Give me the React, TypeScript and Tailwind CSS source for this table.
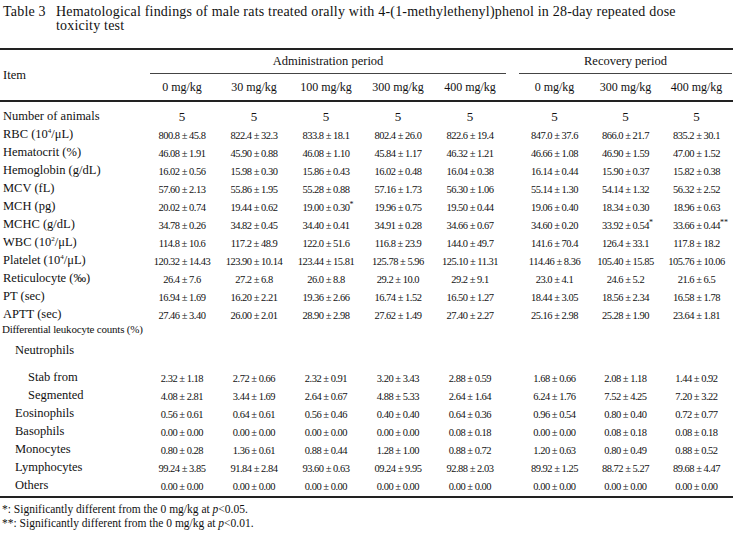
import React from 'react';

type Row = {
  label: React.ReactNode;
  indent?: number;
  values?: string[];
};

const Sup = ({ children }: { children: React.ReactNode }) => (
  <span className="relative -top-[5px] text-[7px] leading-none">{children}</span>
);

const rows: Row[] = [
  { label: 'Number of animals', values: ['5', '5', '5', '5', '5', '5', '5', '5'] },
  {
    label: (
      <>
        RBC (10<Sup>4</Sup>/μL)
      </>
    ),
    values: ['800.8 ± 45.8', '822.4 ± 32.3', '833.8 ± 18.1', '802.4 ± 26.0', '822.6 ± 19.4', '847.0 ± 37.6', '866.0 ± 21.7', '835.2 ± 30.1'],
  },
  {
    label: 'Hematocrit (%)',
    values: ['46.08 ± 1.91', '45.90 ± 0.88', '46.08 ± 1.10', '45.84 ± 1.17', '46.32 ± 1.21', '46.66 ± 1.08', '46.90 ± 1.59', '47.00 ± 1.52'],
  },
  {
    label: 'Hemoglobin (g/dL)',
    values: ['16.02 ± 0.56', '15.98 ± 0.30', '15.86 ± 0.43', '16.02 ± 0.48', '16.04 ± 0.38', '16.14 ± 0.44', '15.90 ± 0.37', '15.82 ± 0.38'],
  },
  {
    label: 'MCV (fL)',
    values: ['57.60 ± 2.13', '55.86 ± 1.95', '55.28 ± 0.88', '57.16 ± 1.73', '56.30 ± 1.06', '55.14 ± 1.30', '54.14 ± 1.32', '56.32 ± 2.52'],
  },
  {
    label: 'MCH (pg)',
    values: ['20.02 ± 0.74', '19.44 ± 0.62', '19.00 ± 0.30*', '19.96 ± 0.75', '19.50 ± 0.44', '19.06 ± 0.40', '18.34 ± 0.30', '18.96 ± 0.63'],
  },
  {
    label: 'MCHC (g/dL)',
    values: ['34.78 ± 0.26', '34.82 ± 0.45', '34.40 ± 0.41', '34.91 ± 0.28', '34.66 ± 0.67', '34.60 ± 0.20', '33.92 ± 0.54*', '33.66 ± 0.44**'],
  },
  {
    label: (
      <>
        WBC (10<Sup>2</Sup>/μL)
      </>
    ),
    values: ['114.8 ± 10.6', '117.2 ± 48.9', '122.0 ± 51.6', '116.8 ± 23.9', '144.0 ± 49.7', '141.6 ± 70.4', '126.4 ± 33.1', '117.8 ± 18.2'],
  },
  {
    label: (
      <>
        Platelet (10<Sup>4</Sup>/μL)
      </>
    ),
    values: ['120.32 ± 14.43', '123.90 ± 10.14', '123.44 ± 15.81', '125.78 ± 5.96', '125.10 ± 11.31', '114.46 ± 8.36', '105.40 ± 15.85', '105.76 ± 10.06'],
  },
  {
    label: 'Reticulocyte (‰)',
    values: ['26.4 ± 7.6', '27.2 ± 6.8', '26.0 ± 8.8', '29.2 ± 10.0', '29.2 ± 9.1', '23.0 ± 4.1', '24.6 ± 5.2', '21.6 ± 6.5'],
  },
  {
    label: 'PT (sec)',
    values: ['16.94 ± 1.69', '16.20 ± 2.21', '19.36 ± 2.66', '16.74 ± 1.52', '16.50 ± 1.27', '18.44 ± 3.05', '18.56 ± 2.34', '16.58 ± 1.78'],
  },
  {
    label: 'APTT (sec)',
    values: ['27.46 ± 3.40', '26.00 ± 2.01', '28.90 ± 2.98', '27.62 ± 1.49', '27.40 ± 2.27', '25.16 ± 2.98', '25.28 ± 1.90', '23.64 ± 1.81'],
  },
];

const diffRows: Row[] = [
  {
    label: 'Stab from',
    indent: 2,
    values: ['2.32 ± 1.18', '2.72 ± 0.66', '2.32 ± 0.91', '3.20 ± 3.43', '2.88 ± 0.59', '1.68 ± 0.66', '2.08 ± 1.18', '1.44 ± 0.92'],
  },
  {
    label: 'Segmented',
    indent: 2,
    values: ['4.08 ± 2.81', '3.44 ± 1.69', '2.64 ± 0.67', '4.88 ± 5.33', '2.64 ± 1.64', '6.24 ± 1.76', '7.52 ± 4.25', '7.20 ± 3.22'],
  },
  {
    label: 'Eosinophils',
    indent: 1,
    values: ['0.56 ± 0.61', '0.64 ± 0.61', '0.56 ± 0.46', '0.40 ± 0.40', '0.64 ± 0.36', '0.96 ± 0.54', '0.80 ± 0.40', '0.72 ± 0.77'],
  },
  {
    label: 'Basophils',
    indent: 1,
    values: ['0.00 ± 0.00', '0.00 ± 0.00', '0.00 ± 0.00', '0.00 ± 0.00', '0.08 ± 0.18', '0.00 ± 0.00', '0.08 ± 0.18', '0.08 ± 0.18'],
  },
  {
    label: 'Monocytes',
    indent: 1,
    values: ['0.80 ± 0.28', '1.36 ± 0.61', '0.88 ± 0.44', '1.28 ± 1.00', '0.88 ± 0.72', '1.20 ± 0.63', '0.80 ± 0.49', '0.88 ± 0.52'],
  },
  {
    label: 'Lymphocytes',
    indent: 1,
    values: ['99.24 ± 3.85', '91.84 ± 2.84', '93.60 ± 0.63', '09.24 ± 9.95', '92.88 ± 2.03', '89.92 ± 1.25', '88.72 ± 5.27', '89.68 ± 4.47'],
  },
  {
    label: 'Others',
    indent: 1,
    values: ['0.00 ± 0.00', '0.00 ± 0.00', '0.00 ± 0.00', '0.00 ± 0.00', '0.00 ± 0.00', '0.00 ± 0.00', '0.00 ± 0.00', '0.00 ± 0.00'],
  },
];

const grid = 'grid grid-cols-[146px_repeat(5,72px)_13px_repeat(3,71px)]';

function Value({ v }: { v: string }) {
  if (v === '5') return <span className="text-[13px]">5</span>;
  const stars = v.match(/\*+$/)?.[0] ?? '';
  const text = v.replace(/\*+$/, '');
  return (
    <span className="relative text-[10.5px] tracking-[-0.5px] whitespace-nowrap">
      {text}
      {stars && (
        <span className="absolute left-full -top-[3px] text-[8px] tracking-normal">{stars}</span>
      )}
    </span>
  );
}

function DataRow({ row }: { row: Row }) {
  const pad = row.indent === 2 ? 'pl-[28px]' : row.indent === 1 ? 'pl-[15px]' : 'pl-[3px]';
  const vals = row.values ?? [];
  return (
    <div className={`${grid} items-center h-[18px]`}>
      <div className={`${pad} text-[12.5px] whitespace-nowrap`}>{row.label}</div>
      {vals.slice(0, 5).map((v, i) => (
        <div key={i} className="text-center">
          <Value v={v} />
        </div>
      ))}
      <div />
      {vals.slice(5).map((v, i) => (
        <div key={i} className="text-center">
          <Value v={v} />
        </div>
      ))}
    </div>
  );
}

export default function App() {
  const admin = ['0 mg/kg', '30 mg/kg', '100 mg/kg', '300 mg/kg', '400 mg/kg'];
  const recovery = ['0 mg/kg', '300 mg/kg', '400 mg/kg'];

  return (
    <div
      className="w-[733px] h-[534px] bg-white text-[#111] overflow-hidden"
      style={{ fontFamily: '"Liberation Serif", "DejaVu Serif", serif' }}
    >
      {/* caption */}
      <div className="flex pl-[3px] pt-[5px] text-[14px] leading-[14px] tracking-[0.2px] h-[48px] whitespace-nowrap">
        <div className="w-[53px] shrink-0">Table 3</div>
        <div>
          Hematological findings of male rats treated orally with 4-(1-methylethenyl)phenol in 28-day repeated dose
          <br />
          toxicity test
        </div>
      </div>

      <div className="h-[2px] bg-[#222]" />

      {/* header */}
      <div className={`${grid} h-[50px] text-[12.5px]`}>
        <div className="row-span-2 flex items-center pl-[3px]">Item</div>
        <div className="col-span-5 ml-[4px] flex items-end justify-center pb-[2px] border-b-[1.5px] border-[#444] h-[24px]">
          Administration period
        </div>
        <div />
        <div className="col-span-3 flex items-end justify-center pb-[2px] border-b-[1.5px] border-[#444] h-[24px]">
          Recovery period
        </div>
        {admin.map((a) => (
          <div key={a} className="flex items-center justify-center text-[12px] h-[26px]">
            {a}
          </div>
        ))}
        <div />
        {recovery.map((a) => (
          <div key={a} className="flex items-center justify-center text-[12px] h-[26px]">
            {a}
          </div>
        ))}
      </div>

      <div className="h-[2px] bg-[#222]" />

      {/* body */}
      <div className="pt-[2px] pb-[5px]">
        {rows.map((r, i) => (
          <DataRow key={i} row={r} />
        ))}
        <div className="h-[18px] flex items-center pl-[2px] text-[11px] tracking-[-0.2px]">
          Differential leukocyte counts (%)
        </div>
        <div className="h-[27px] pt-[3px] pl-[15px] text-[12.5px] leading-[18px]">Neutrophils</div>
        {diffRows.map((r, i) => (
          <DataRow key={i} row={r} />
        ))}
      </div>

      <div className="h-[2px] bg-[#222]" />

      {/* footnotes */}
      <div className="pl-[2px] pt-[4px] text-[11.5px] leading-[14px]">
        <div>
          *: Significantly different from the 0 mg/kg at <i>p</i>&lt;0.05.
        </div>
        <div>
          **: Significantly different from the 0 mg/kg at <i>p</i>&lt;0.01.
        </div>
      </div>
    </div>
  );
}
